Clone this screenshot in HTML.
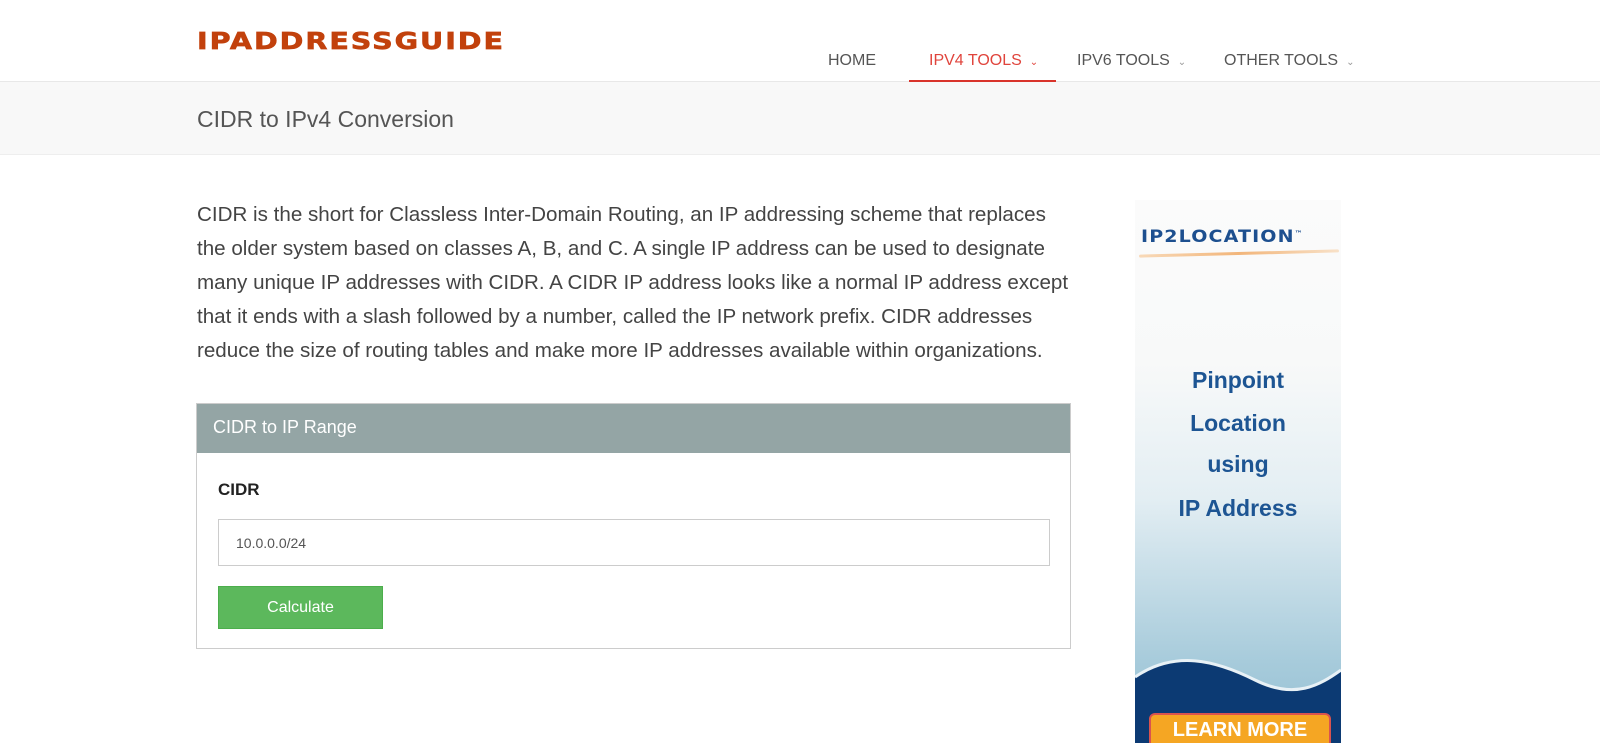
<!DOCTYPE html>
<html><head><meta charset="utf-8"><style>
*{box-sizing:border-box;margin:0;padding:0}
body{width:1600px;height:743px;overflow:hidden;background:#fff;font-family:"Liberation Sans",Arial,sans-serif;position:relative}
.logo{position:absolute;left:197px;top:29px;font-family:"DejaVu Sans","Liberation Sans",sans-serif;font-weight:900;font-size:22px;letter-spacing:1.5px;color:#c2410c;transform:scaleX(1.3) scaleY(1.05);transform-origin:left top;-webkit-text-stroke:0.6px #c2410c}
.nav{position:absolute;top:52px;font-size:16px;color:#555}
.nav span.c{font-size:10px;margin-left:8px;color:#999}
.hdrline{position:absolute;top:81px;left:0;width:1600px;height:1px;background:#e8e8e8}
.band{position:absolute;top:82px;left:0;width:1600px;height:73px;background:#f8f8f8;border-bottom:1px solid #eee}
.band h1{position:absolute;left:197px;top:24px;font-size:23px;font-weight:normal;color:#555}
p.intro{position:absolute;left:197px;top:198px;width:900px;white-space:nowrap;font-size:20.6px;line-height:34px;color:#444}
.box{position:absolute;left:196px;top:403px;width:875px;height:246px;border:1px solid #ccc}
.box .h{background:#94a5a5;height:49px;color:#fff;font-size:18px;padding:13px 16px}
.box label{position:absolute;left:21px;top:76px;font-weight:bold;font-size:17px;color:#222}
.box .in{position:absolute;left:21px;top:115px;width:832px;height:47px;border:1px solid #ccc;font-size:14px;color:#555;padding:15px 17px}
.box .btn{position:absolute;left:21px;top:182px;width:165px;height:43px;background:#5cb85c;border:1px solid #4cae4c;color:#fff;font-size:16px;text-align:center;line-height:41px}
.ad{position:absolute;left:1135px;top:200px;width:206px;height:543px;overflow:hidden;background:linear-gradient(#fbfbfb 0%,#f8f9f9 30%,#e3eef3 55%,#a7cbdb 85%,#93bfd3 100%)}
.ad .t{position:absolute;left:0;width:206px;text-align:center;color:#1d5593;font-weight:bold;font-size:23px}
</style></head><body>
<div class="logo">IPADDRESSGUIDE</div>
<div class="nav" style="left:828px">HOME</div>
<div class="nav" style="left:929px;color:#e0443c">IPV4 TOOLS<span class="c" style="color:#e0443c">⌄</span></div>
<div style="position:absolute;left:909px;top:80px;width:147px;height:2px;background:#d9342b;z-index:2"></div>
<div class="nav" style="left:1077px">IPV6 TOOLS<span class="c">⌄</span></div>
<div class="nav" style="left:1224px">OTHER TOOLS<span class="c">⌄</span></div>
<div class="hdrline"></div>
<div class="band"><h1>CIDR to IPv4 Conversion</h1></div>
<p class="intro">CIDR is the short for Classless Inter-Domain Routing, an IP addressing scheme that replaces<br>the older system based on classes A, B, and C. A single IP address can be used to designate<br>many unique IP addresses with CIDR. A CIDR IP address looks like a normal IP address except<br>that it ends with a slash followed by a number, called the IP network prefix. CIDR addresses<br>reduce the size of routing tables and make more IP addresses available within organizations.</p>
<div class="box"><div class="h">CIDR to IP Range</div><label>CIDR</label><div class="in">10.0.0.0/24</div><div class="btn">Calculate</div></div>
<div class="ad">
<div style="position:absolute;left:6px;top:27px;font-family:'DejaVu Sans',sans-serif;font-weight:bold;font-size:17px;letter-spacing:1px;color:#1d4f8f;transform:scaleX(1.12);transform-origin:left">IP2LOCATION<sup style="font-size:7px">™</sup></div>
<div style="position:absolute;left:4px;top:52px;width:200px;height:3px;background:linear-gradient(90deg,#f8d9b8,#f2b57a,#f8e1c8);border-radius:2px;transform:rotate(-1.5deg)"></div>
<div class="t" style="top:167px">Pinpoint</div>
<div class="t" style="top:210px">Location</div>
<div class="t" style="top:251px">using</div>
<div class="t" style="top:295px">IP Address</div>
<svg style="position:absolute;left:0;top:445px" width="206" height="98"><path d="M0 32 C40 5 80 15 120 35 C160 55 185 40 206 25 L206 98 L0 98Z" fill="#0c3a73"/><path d="M0 32 C40 5 80 15 120 35 C160 55 185 40 206 25" stroke="#e8f1f6" stroke-width="3" fill="none"/></svg>
<div style="position:absolute;left:14px;top:513px;width:182px;height:40px;background:#f5a623;border:2px solid #d9534f;border-radius:6px;color:#fff;font-weight:bold;font-size:20px;text-align:center;line-height:30px">LEARN MORE</div>
</div>
</body></html>
